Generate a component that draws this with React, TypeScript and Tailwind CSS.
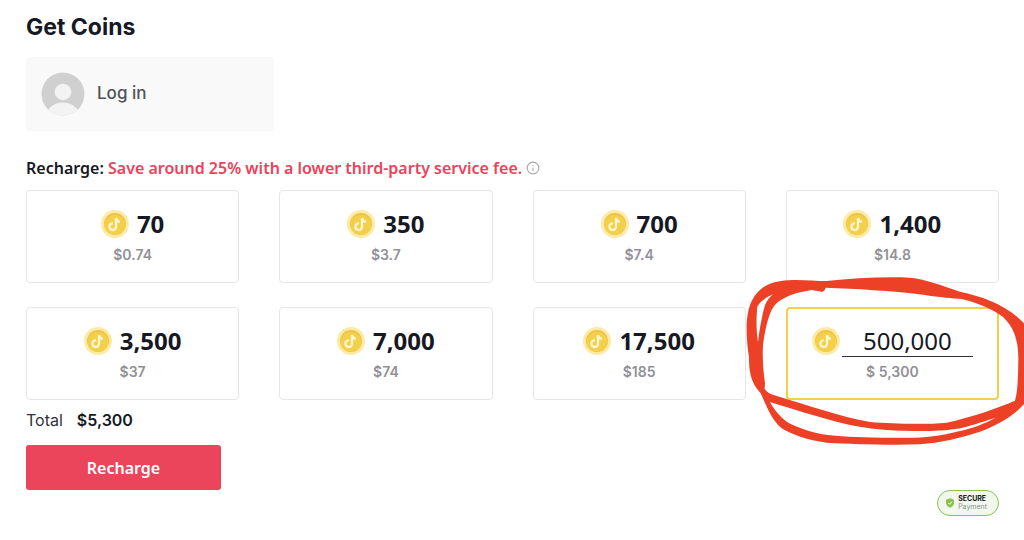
import { useState } from 'react';
import { Info } from 'lucide-react';

interface CoinPack {
  coins: string;
  price: string;
}

const packs: CoinPack[] = [
  { coins: '70', price: '$0.74' },
  { coins: '350', price: '$3.7' },
  { coins: '700', price: '$7.4' },
  { coins: '1,400', price: '$14.8' },
  { coins: '3,500', price: '$37' },
  { coins: '7,000', price: '$74' },
  { coins: '17,500', price: '$185' },
];

function CoinIcon() {
  return (
    <svg className="size-7 shrink-0" viewBox="0 0 84 84" aria-hidden="true">
      <circle cx="42" cy="42" r="42" fill="#fbeba4" />
      <circle cx="42" cy="42" r="33" fill="#f0c04a" />
      <ellipse cx="42" cy="44.500" rx="32" ry="30.500" fill="#f3d04b" />
      <path d="M45 24v26a10 10 0 1 1-9-10M45 24c1 7 5 11 12 11" fill="none" stroke="#fff6cf" strokeWidth="7" />
    </svg>
  );
}

function Avatar() {
  return (
    <svg className="size-11 shrink-0" viewBox="0 0 44 44" aria-hidden="true">
      <clipPath id="avatar-clip">
        <circle cx="22" cy="22" r="21.500" />
      </clipPath>
      <g clipPath="url(#avatar-clip)">
        <rect width="44" height="44" fill="#d0d0d0" />
        <circle cx="22" cy="20" r="8.300" fill="#f3f3f3" />
        <ellipse cx="22" cy="44" rx="16.500" ry="13.500" fill="#f3f3f3" />
      </g>
    </svg>
  );
}

// hand drawn loop around the custom amount card
function MarkerLoop() {
  return (
    <svg className="pointer-events-none absolute -top-[39px] -right-[27px] h-[180px] w-[284px]" viewBox="0 0 852 540" aria-hidden="true">
      <path
        fill="#ec4027"
        fillRule="evenodd"
        d="M20 180C20 130 28 82 70 52C100 32 140 30 170 30C200 31 230 33 260 33C340 25 420 20 510 23C560 28 600 45 660 65C730 80 800 105 852 160L852 402C820 440 770 465 720 485C660 505 600 518 540 523C440 526 340 522 260 518C200 510 160 495 125 475C95 450 80 410 62 370C30 335 27 300 27 260C22 230 20 200 20 180Z
        M257 53C350 56 450 62 550 74C600 82 640 85 665 87C720 100 765 122 790 142C825 175 836 220 835 270C834 320 834 360 825 392C770 415 700 440 620 458C560 464 460 462 390 456C300 440 200 405 110 378C90 372 80 366 74 357L75 340C68 290 66 240 71 210C78 170 85 140 96 118C110 90 150 70 215 60L245 65Q253 66 257 53Z
        M100 73C80 80 60 95 52 110C49 140 48 180 54 216C58 180 65 140 75 105C82 90 90 80 100 73Z
        M90 396C150 415 230 440 320 463C390 478 440 482 520 483C600 483 640 480 680 470C720 458 750 448 768 443C730 462 700 475 650 485C600 497 560 503 500 503C400 504 320 502 270 496C220 490 170 472 140 455C115 435 100 415 90 396Z"
      />
    </svg>
  );
}

function PackCard({ coins, price }: CoinPack) {
  return (
    <button type="button" className="flex flex-col items-center rounded border border-[#e6e6e8] bg-white pt-[19px] pb-[17px]">
      <span className="flex items-center gap-2">
        <CoinIcon />
        <span className="font-['Noto_Sans',sans-serif] text-2xl leading-7 font-bold">{coins}</span>
      </span>
      <span className="mt-[7px] text-sm leading-5 font-semibold text-[#919197]">{price}</span>
    </button>
  );
}

function App() {
  const [amount, setAmount] = useState('500,000');

  return (
    <main className="flex flex-col overflow-x-hidden bg-white pt-[9px] pr-[25px] pb-6 pl-[26px] font-['Inter',sans-serif] text-[#161823]">
      <h1 className="text-[23px] leading-9 font-bold">Get Coins</h1>

      <a href="#login" className="mt-3 flex w-[248px] items-center gap-3 rounded bg-[#f9f9f9] py-[15px] pl-[15px] text-[17px] font-medium text-[#505158]">
        <Avatar />
        Log in
      </a>

      <div className="mt-[27px] flex items-center gap-1 font-['Noto_Sans',sans-serif] text-base leading-5 font-semibold">
        <p>
          Recharge: <span className="text-[#ea445a]">Save around 25% with a lower third-party service fee.</span>
        </p>
        <Info className="size-3.5 text-[#a9a9ae]" strokeWidth={2} />
      </div>

      <div className="mt-3 grid grid-cols-4 gap-x-10 gap-y-6">
        {packs.map((pack) => (
          <PackCard key={pack.coins} coins={pack.coins} price={pack.price} />
        ))}
        <div className="relative flex flex-col items-center rounded border-2 border-[#f3d04b] bg-white pt-4">
          <div className="flex items-center gap-0.5">
            <CoinIcon />
            <input
              aria-label="Custom coin amount"
              className="h-8 w-[131px] border-b border-[#30313b] text-center font-['Noto_Sans',sans-serif] text-2xl outline-none"
              value={amount}
              onChange={(e) => setAmount(e.target.value)}
            />
          </div>
          <span className="mt-[5px] text-sm leading-5 font-semibold text-[#919197]">$ 5,300</span>
          <MarkerLoop />
        </div>
      </div>

      <p className="mt-2.5 flex gap-3.5 text-base leading-5">
        <span className="text-[#30313b]">Total</span>
        <span className="font-semibold">$5,300</span>
      </p>

      <button type="button" className="mt-[15px] h-[45px] w-[195px] rounded-[3px] bg-[#eb455b] font-['Noto_Sans',sans-serif] text-base font-semibold text-white">
        Recharge
      </button>

      <div className="flex items-center gap-1 self-end rounded-full border border-[#8cc152] bg-[#f1f7ec] py-1 pr-[11px] pl-2">
        <svg className="h-2.5 w-2" viewBox="0 0 24 28" aria-hidden="true">
          <path d="M12 0L24 4V14C24 21 18 26 12 28C6 26 0 21 0 14V4Z" fill="#8cc152" />
          <path d="M7 14L11 18L18 10" fill="none" stroke="#fff" strokeWidth="3" />
        </svg>
        <div className="text-[7px] leading-[8px]">
          <div className="font-bold">SECURE</div>
          <div className="text-[#8b8f92]">Payment</div>
        </div>
      </div>
    </main>
  );
}

export default App;
